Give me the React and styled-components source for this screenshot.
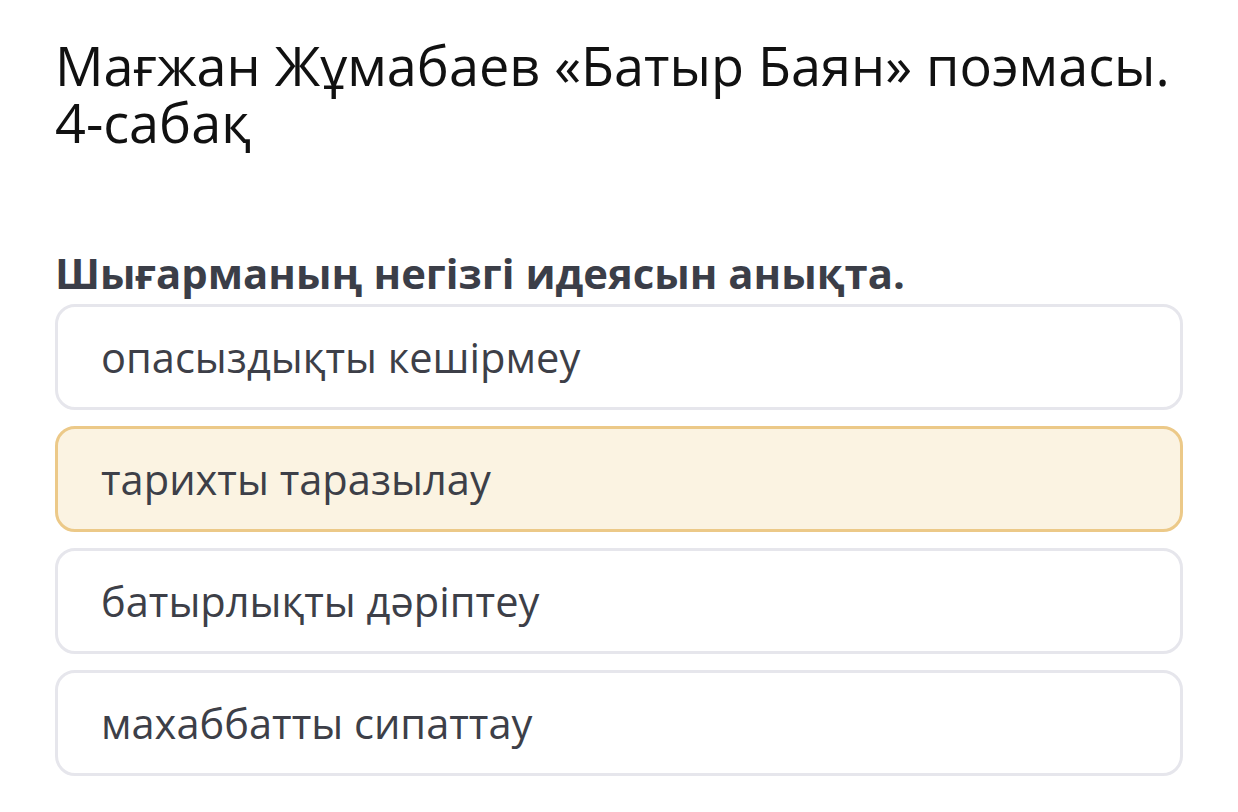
import React from 'react'
import styled, { createGlobalStyle } from 'styled-components'

const GlobalStyle = createGlobalStyle`
  html, body {
    margin: 0;
    padding: 0;
    background: #fff;
  }
  body {
    font-family: "Open Sans", "Noto Sans", sans-serif;
  }
`

const Page = styled.div`
  width: 1238px;
  height: 812px;
  box-sizing: border-box;
  padding: 37px 55px 0 55px;
  overflow: hidden;
`

const Title = styled.h1`
  margin: 0;
  font-size: 54px;
  font-weight: 400;
  line-height: 57px;
  color: #111;
`

const Question = styled.h2`
  margin: 96px 0 5px 0;
  font-size: 41.8px;
  font-weight: 700;
  line-height: 52px;
  color: #3b3e48;
`

const Options = styled.div`
  display: flex;
  flex-direction: column;
  gap: 16px;
`

const Option = styled.div`
  display: flex;
  align-items: center;
  height: 106px;
  box-sizing: border-box;
  padding: 0 43px;
  border: 3px solid ${p => (p.$selected ? '#ecc988' : '#e6e6ec')};
  border-radius: 20px;
  background: ${p => (p.$selected ? '#fbf3e2' : '#fff')};
  font-size: 41.6px;
  color: #3d3f48;
`

const options = [
  'опасыздықты кешірмеу',
  'тарихты таразылау',
  'батырлықты дәріптеу',
  'махаббатты сипаттау',
]

export default function App() {
  return (
    <>
      <GlobalStyle />
      <Page>
        <Title>
          Мағжан Жұмабаев «Батыр Баян» поэмасы.
          <br />
          4-сабақ
        </Title>
        <Question>Шығарманың негізгі идеясын анықта.</Question>
        <Options>
          {options.map((o, i) => (
            <Option key={o} $selected={i === 1}>
              {o}
            </Option>
          ))}
        </Options>
      </Page>
    </>
  )
}
